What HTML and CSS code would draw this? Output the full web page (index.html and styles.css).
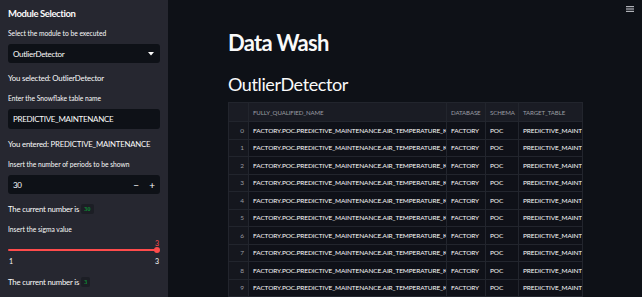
FILE: index.html
```html
<!DOCTYPE html>
<html lang="en">
<head>
    <meta charset="UTF-8">
    <meta name="viewport" content="width=device-width, initial-scale=1.0">
    <title>Data Wash</title>
    <link rel="stylesheet" href="styles.css">
</head>
<body>

<div class="app">
    <!-- Sidebar with the module inputs -->
    <aside class="sidebar">
        <h2 class="side-title">Module Selection</h2>

        <div class="widget-label">Select the module to be executed</div>
        <div class="field select">
            <span>OutlierDetector</span>
            <svg class="caret" width="6" height="4" viewBox="0 0 6 4"><path d="M0 0h6L3 3.5z" fill="#fafafa"/></svg>
        </div>
        <p class="side-text">You selected: OutlierDetector</p>

        <div class="widget-label">Enter the Snowflake table name</div>
        <div class="field text-input"><span>PREDICTIVE_MAINTENANCE</span></div>
        <p class="side-text">You entered: PREDICTIVE_MAINTENANCE</p>

        <div class="widget-label">Insert the number of periods to be shown</div>
        <div class="field number">
            <span class="grow">30</span>
            <span class="step">&minus;</span>
            <span class="step">+</span>
        </div>
        <p class="side-text">The current number is <code>30</code></p>

        <div class="widget-label">Insert the sigma value</div>
        <div class="slider">
            <div class="slider-value">3</div>
            <div class="slider-track">
                <div class="track-fill"></div>
                <div class="thumb"></div>
            </div>
            <div class="slider-ticks"><span>1</span><span>3</span></div>
        </div>
        <p class="side-text last">The current number is <code>3</code></p>
    </aside>

    <!-- Main page -->
    <main class="main">
        <div class="toolbar">
            <svg width="8" height="6" viewBox="0 0 8 6">
                <rect x="0" y="0" width="8" height="1.2" fill="#b0b2b8"/>
                <rect x="0" y="2.4" width="8" height="1.2" fill="#b0b2b8"/>
                <rect x="0" y="4.8" width="8" height="1.2" fill="#b0b2b8"/>
            </svg>
        </div>

        <div class="content">
            <h1>Data Wash</h1>
            <h2>OutlierDetector</h2>

            <table class="frame">
                <colgroup>
                    <col class="c-idx">
                    <col class="c-name">
                    <col class="c-db">
                    <col class="c-schema">
                    <col class="c-target">
                </colgroup>
                <thead>
                    <tr>
                        <th></th>
                        <th>FULLY_QUALIFIED_NAME</th>
                        <th>DATABASE</th>
                        <th>SCHEMA</th>
                        <th>TARGET_TABLE</th>
                    </tr>
                </thead>
                <tbody>
                    <tr><td class="idx">0</td><td>FACTORY.POC.PREDICTIVE_MAINTENANCE.AIR_TEMPERATURE_K</td><td>FACTORY</td><td>POC</td><td>PREDICTIVE_MAINTENANCE</td></tr>
                    <tr><td class="idx">1</td><td>FACTORY.POC.PREDICTIVE_MAINTENANCE.AIR_TEMPERATURE_K</td><td>FACTORY</td><td>POC</td><td>PREDICTIVE_MAINTENANCE</td></tr>
                    <tr><td class="idx">2</td><td>FACTORY.POC.PREDICTIVE_MAINTENANCE.AIR_TEMPERATURE_K</td><td>FACTORY</td><td>POC</td><td>PREDICTIVE_MAINTENANCE</td></tr>
                    <tr><td class="idx">3</td><td>FACTORY.POC.PREDICTIVE_MAINTENANCE.AIR_TEMPERATURE_K</td><td>FACTORY</td><td>POC</td><td>PREDICTIVE_MAINTENANCE</td></tr>
                    <tr><td class="idx">4</td><td>FACTORY.POC.PREDICTIVE_MAINTENANCE.AIR_TEMPERATURE_K</td><td>FACTORY</td><td>POC</td><td>PREDICTIVE_MAINTENANCE</td></tr>
                    <tr><td class="idx">5</td><td>FACTORY.POC.PREDICTIVE_MAINTENANCE.AIR_TEMPERATURE_K</td><td>FACTORY</td><td>POC</td><td>PREDICTIVE_MAINTENANCE</td></tr>
                    <tr><td class="idx">6</td><td>FACTORY.POC.PREDICTIVE_MAINTENANCE.AIR_TEMPERATURE_K</td><td>FACTORY</td><td>POC</td><td>PREDICTIVE_MAINTENANCE</td></tr>
                    <tr><td class="idx">7</td><td>FACTORY.POC.PREDICTIVE_MAINTENANCE.AIR_TEMPERATURE_K</td><td>FACTORY</td><td>POC</td><td>PREDICTIVE_MAINTENANCE</td></tr>
                    <tr><td class="idx">8</td><td>FACTORY.POC.PREDICTIVE_MAINTENANCE.AIR_TEMPERATURE_K</td><td>FACTORY</td><td>POC</td><td>PREDICTIVE_MAINTENANCE</td></tr>
                    <tr><td class="idx">9</td><td>FACTORY.POC.PREDICTIVE_MAINTENANCE.AIR_TEMPERATURE_K</td><td>FACTORY</td><td>POC</td><td>PREDICTIVE_MAINTENANCE</td></tr>
                </tbody>
            </table>
        </div>
    </main>
</div>

</body>
</html>
```

FILE: styles.css
```css
/* Page frame */
body {
    margin: 0;
    background-color: #0e1117;
    color: #fafafa;
    font-family: Lato, "Noto Sans", sans-serif;
}

.app {
    display: flex;
    height: 297px;
    overflow: hidden;
}

/* Sidebar */
.sidebar {
    flex: none;
    width: 152px;
    padding: 6px 8px 0;
    background-color: #262730;
}

.side-title {
    font-size: 9.5px;
    font-weight: 700;
    line-height: 16px;
    margin: 0 0 6px;
}

.widget-label {
    font-size: 6.7px;
    line-height: 10px;
    margin-bottom: 6px;
}

.field {
    display: flex;
    align-items: center;
    height: 19px;
    padding: 0 5px;
    border-radius: 3px;
    background-color: #0e1117;
    font-size: 8px;
    letter-spacing: -0.3px;
}

.select {
    justify-content: space-between;
    padding-right: 6px;
}

.text-input {
    height: 20px;
}

.number {
    padding-right: 0;
}

.number .grow {
    flex: 1;
}

.step {
    width: 16px;
    text-align: center;
    font-size: 10px;
}

.side-text {
    font-size: 7.8px;
    letter-spacing: -0.2px;
    line-height: 12px;
    white-space: nowrap;
    margin: 9px 0;
}

.side-text.last {
    margin-top: 10px;
}

.side-text code {
    display: inline-block;
    padding: 1px 3px;
    border-radius: 2px;
    background-color: #1c1e25;
    color: #09ab3b;
    font-family: "DejaVu Sans Mono", monospace;
    font-size: 5.5px;
    letter-spacing: 0;
    line-height: 8px;
    vertical-align: 1px;
}

/* Slider */
.slider {
    margin-top: -1px;
}

.slider-value {
    text-align: right;
    color: #ff4b4b;
    font-size: 7px;
    line-height: 8px;
    padding-right: 1px;
}

.slider-track {
    display: flex;
    align-items: center;
    height: 6px;
}

.track-fill {
    flex: 1;
    height: 2.5px;
    background-color: #ff4b4b;
    border-radius: 1px;
}

.thumb {
    width: 6px;
    height: 6px;
    margin-left: -2px;
    border-radius: 50%;
    background-color: #ff4b4b;
}

.slider-ticks {
    display: flex;
    justify-content: space-between;
    margin-top: 3px;
    font-size: 7px;
    line-height: 10px;
    padding: 0 1px;
}

/* Main area */
.main {
    flex: 1;
    display: flex;
    flex-direction: column;
}

.toolbar {
    display: flex;
    justify-content: flex-end;
    height: 18px;
    padding: 6px 8px 0;
    box-sizing: border-box;
}

.content {
    width: 354px;
    margin: 0 auto;
    padding-top: 16px;
}

h1 {
    font-size: 22px;
    font-weight: 700;
    letter-spacing: -0.7px;
    line-height: 28px;
    margin: 0 0 15px;
}

h2 {
    font-size: 18px;
    font-weight: 400;
    letter-spacing: -0.4px;
    line-height: 24px;
    margin: 0 0 6px;
}

/* Dataframe */
.frame {
    width: 354px;
    table-layout: fixed;
    border-collapse: collapse;
    font-size: 6.5px;
    letter-spacing: -0.1px;
}

.c-idx { width: 20px; }
.c-name { width: 198px; }
.c-db { width: 39px; }
.c-schema { width: 33px; }
.c-target { width: 64px; }

.frame th, .frame td {
    padding: 0 4px;
    border: 1px solid #22252d;
    white-space: nowrap;
    overflow: hidden;
    text-align: left;
}

.frame th {
    height: 18px;
    font-size: 6.1px;
    font-weight: 400;
    color: #9a9ca3;
    background-color: #1a1c24;
}

.frame td {
    height: 16.5px;
    background-color: #0f1118;
}

.frame td.idx {
    text-align: right;
    color: #9a9ca3;
    background-color: #15171e;
}
```
